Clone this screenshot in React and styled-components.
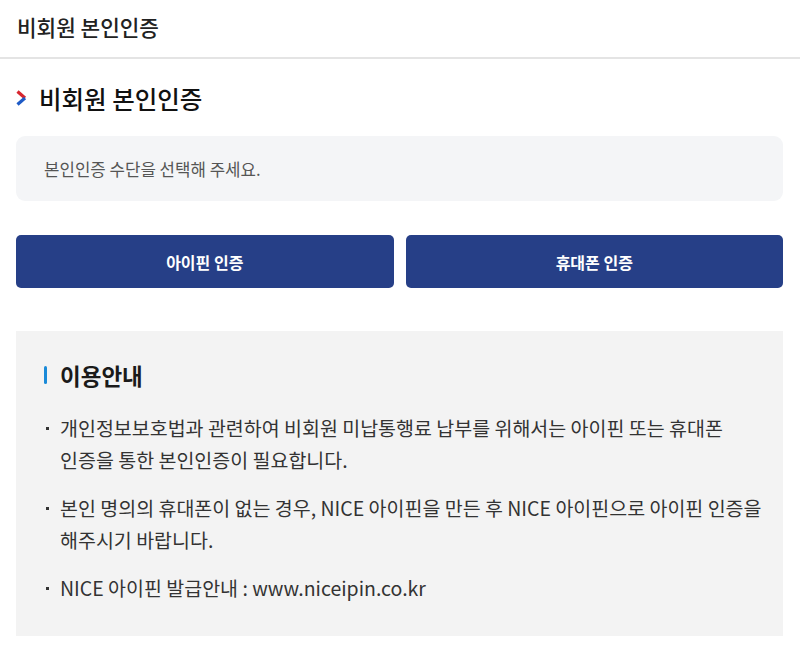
import React from "react";
import styled, { createGlobalStyle } from "styled-components";

const Global = createGlobalStyle`
  html, body { margin: 0; padding: 0; background: #fff; }
  body { font-family: "Noto Sans CJK KR", "Noto Sans", sans-serif; color: #222; }
  * { box-sizing: border-box; }
`;

const Page = styled.div`
  width: 800px;
  min-height: 649px;
  background: #fff;
`;

const TopBar = styled.header`
  height: 59px;
  display: flex;
  align-items: center;
  padding: 0 17px 4px;
  border-bottom: 2px solid #e4e4e4;
  font-size: 21.3px;
  font-weight: 500;
  color: #222;
`;

const Content = styled.main`
  padding: 20px 17px 14px 16px;
`;

const SectionTitle = styled.h2`
  display: flex;
  align-items: center;
  gap: 11px;
  margin: 0 0 19px;
  height: 38px;
  font-size: 24.5px;
  font-weight: 500;
  color: #111;
`;

const Notice = styled.div`
  height: 65px;
  display: flex;
  align-items: center;
  padding: 0 28px;
  background: #f4f5f7;
  border-radius: 9px;
  font-size: 16.8px;
  color: #555;
`;

const ButtonRow = styled.div`
  display: grid;
  grid-template-columns: 1fr 1fr;
  gap: 12px;
  margin-top: 34px;
`;

const AuthButton = styled.button`
  height: 53px;
  border: none;
  border-radius: 5px;
  background: #263f87;
  color: #fff;
  font-family: inherit;
  font-size: 16px;
  font-weight: 700;
  cursor: pointer;
`;

const Guide = styled.section`
  margin-top: 43px;
  background: #f3f3f3;
  padding: 28px 10px 32px 28px;
`;

const GuideTitle = styled.h3`
  display: flex;
  align-items: center;
  gap: 13px;
  margin: 0 0 21px;
  font-size: 22.5px;
  font-weight: 700;
  color: #1a1a1a;
  &::before {
    content: "";
    width: 3px;
    height: 18px;
    border-radius: 2px;
    background: #1a8ad8;
  }
`;

const List = styled.ul`
  list-style: none;
  margin: 0;
  padding: 0;
  display: flex;
  flex-direction: column;
  gap: 16px;
`;

const Item = styled.li`
  position: relative;
  padding-left: 16px;
  font-size: 19.5px;
  line-height: 32px;
  color: #333;
  word-break: keep-all;
  &::before {
    content: "";
    position: absolute;
    left: 2px;
    top: 15px;
    width: 3px;
    height: 3px;
    background: #333;
  }
`;

const Chevron = () => (
  <svg width="12" height="16" viewBox="0 0 12 16">
    <path d="M1.5 1.5 L9 8" stroke="#d8262f" strokeWidth="3.2" fill="none" />
    <path d="M9 8 L1.5 14.5" stroke="#1e5bc6" strokeWidth="3.2" fill="none" />
  </svg>
);

export default function App() {
  return (
    <Page>
      <Global />
      <TopBar>비회원 본인인증</TopBar>
      <Content>
        <SectionTitle>
          <Chevron />
          비회원 본인인증
        </SectionTitle>
        <Notice>본인인증 수단을 선택해 주세요.</Notice>
        <ButtonRow>
          <AuthButton>아이핀 인증</AuthButton>
          <AuthButton>휴대폰 인증</AuthButton>
        </ButtonRow>
        <Guide>
          <GuideTitle>이용안내</GuideTitle>
          <List>
            <Item>
              개인정보보호법과 관련하여 비회원 미납통행료 납부를 위해서는 아이핀 또는 휴대폰 인증을 통한 본인인증이 필요합니다.
            </Item>
            <Item>
              본인 명의의 휴대폰이 없는 경우, NICE 아이핀을 만든 후 NICE 아이핀으로 아이핀 인증을 해주시기 바랍니다.
            </Item>
            <Item>NICE 아이핀 발급안내 : www.niceipin.co.kr</Item>
          </List>
        </Guide>
      </Content>
    </Page>
  );
}
